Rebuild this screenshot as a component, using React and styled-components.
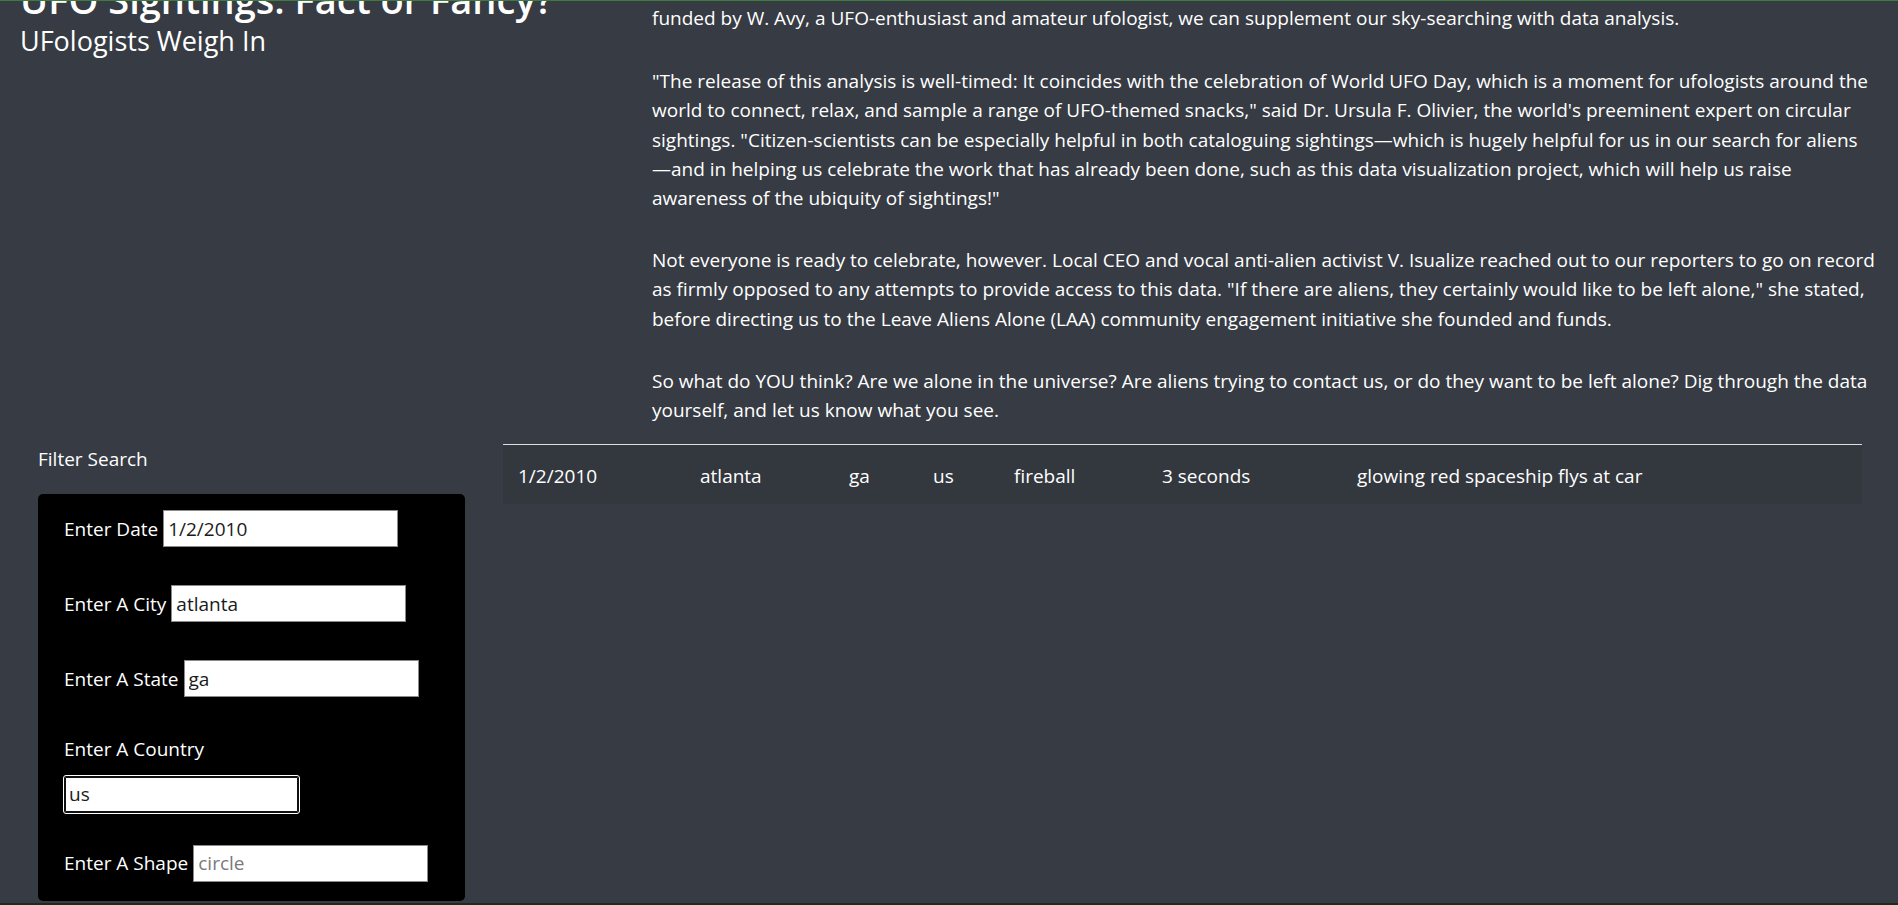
import React from 'react'
import styled, { createGlobalStyle } from 'styled-components'

const GlobalStyle = createGlobalStyle`
  html, body {
    margin: 0;
    padding: 0;
    overflow: hidden;
    background: #373b43;
  }
  body {
    font-family: "Open Sans", "Noto Sans", "Liberation Sans", sans-serif;
    color: #f8f9fa;
  }
  * { box-sizing: border-box; }
`

const WindowEdge = styled.div`
  position: fixed;
  left: 0;
  right: 0;
  ${props => (props.$bottom ? 'bottom: 0;' : 'top: 0;')}
  height: ${props => (props.$bottom ? '2px' : '1px')};
  background: ${props => (props.$bottom ? '#1d2b1b' : '#3d7c3b')};
  z-index: 10;
`

const Page = styled.div`
  width: 1898px;
  height: 905px;
  padding-top: 2px;
  display: flex;
  flex-direction: column;
`

const TopRow = styled.div`
  display: grid;
  grid-template-columns: 652px 1fr;
`

const BottomRow = styled.div`
  display: grid;
  grid-template-columns: 503px 1fr;
`

const Header = styled.header`
  padding-left: 20px;
`

const Title = styled.h1`
  margin: -25px 0 0;
  font-size: 38px;
  line-height: 44px;
  font-weight: 600;
  color: #fff;
  white-space: nowrap;
`

const Subtitle = styled.h3`
  margin: 4px 0 0;
  font-size: 27px;
  line-height: 32px;
  font-weight: 400;
  color: #fff;
`

const Article = styled.article`
  padding: 2px 10px 0 0;
`

const Paragraph = styled.p`
  margin: 0 0 ${props => props.$space || 33}px;
  font-size: 19px;
  line-height: 29.2px;
  white-space: nowrap;
  color: #fff;
`

const Sidebar = styled.aside`
  padding: 1px 0 0 38px;
`

const FilterTitle = styled.div`
  font-size: 19px;
  line-height: 28.5px;
  margin-bottom: 20.5px;
  color: #fff;
`

const FilterPanel = styled.form`
  width: 427px;
  height: 407px;
  background: #000;
  border-radius: 5px;
  padding: 16px 26px 20px;
`

const FilterList = styled.ul`
  list-style: none;
  margin: 0;
  padding: 0;
`

const FilterItem = styled.li`
  display: flex;
  flex-direction: ${props => (props.$stacked ? 'column' : 'row')};
  align-items: ${props => (props.$stacked ? 'flex-start' : 'baseline')};
  gap: ${props => (props.$stacked ? '12px' : '5px')};
  margin-bottom: ${props => props.$space}px;
`

const FilterLabel = styled.label`
  font-size: 19px;
  line-height: 28.5px;
  color: #fff;
  white-space: nowrap;
`

const FilterInput = styled.input`
  width: 235px;
  height: 37px;
  padding: 0 4px;
  font-family: inherit;
  font-size: 19px;
  color: #1b1b1b;
  background: #fff;
  border: 1px solid #8a8a8a;
  border-radius: ${props => (props.$focused ? '2px' : '0')};
  ${props => props.$focused && `
    border-color: #101010;
    box-shadow: inset 0 0 0 1px #101010;
    outline: 1px solid #ffffff;
  `}

  &::placeholder {
    color: #7a7a7a;
  }
`

const Results = styled.section`
  padding-right: 36px;
`

const ResultRow = styled.div`
  display: grid;
  grid-template-columns: 182px 149px 84px 81px 148px 195px 1fr;
  align-items: center;
  height: 60px;
  padding: 2px 0 0 15px;
  border-top: 1px solid #dedede;
  background: #33373e;
`

const Cell = styled.div`
  font-size: 19px;
  color: #fff;
  white-space: nowrap;
`

const sighting = ['1/2/2010', 'atlanta', 'ga', 'us', 'fireball', '3 seconds', 'glowing red spaceship flys at car']

const filters = [
  { id: 'datetime', label: 'Enter Date', value: '1/2/2010' },
  { id: 'city', label: 'Enter A City', value: 'atlanta' },
  { id: 'state', label: 'Enter A State', value: 'ga' },
  { id: 'country', label: 'Enter A Country', value: 'us', stacked: true, focused: true, space: 32 },
  { id: 'shape', label: 'Enter A Shape', placeholder: 'circle', space: 0 },
]

export default function App() {
  return (
    <>
      <GlobalStyle />
      <WindowEdge />
      <Page>
        <TopRow>
          <Header>
            <Title>UFO Sightings: Fact or Fancy?</Title>
            <Subtitle>UFologists Weigh In</Subtitle>
          </Header>
          <Article>
            <Paragraph $space={34}>
              funded by W. Avy, a UFO-enthusiast and amateur ufologist, we can supplement our sky-searching with data analysis.
            </Paragraph>
            <Paragraph>
              "The release of this analysis is well-timed: It coincides with the celebration of World UFO Day, which is a moment for ufologists around the<br />
              world to connect, relax, and sample a range of UFO-themed snacks," said Dr. Ursula F. Olivier, the world's preeminent expert on circular<br />
              sightings. "Citizen-scientists can be especially helpful in both cataloguing sightings—which is hugely helpful for us in our search for aliens<br />
              —and in helping us celebrate the work that has already been done, such as this data visualization project, which will help us raise<br />
              awareness of the ubiquity of sightings!"
            </Paragraph>
            <Paragraph>
              Not everyone is ready to celebrate, however. Local CEO and vocal anti-alien activist V. Isualize reached out to our reporters to go on record<br />
              as firmly opposed to any attempts to provide access to this data. "If there are aliens, they certainly would like to be left alone," she stated,<br />
              before directing us to the Leave Aliens Alone (LAA) community engagement initiative she founded and funds.
            </Paragraph>
            <Paragraph $space={19}>
              So what do YOU think? Are we alone in the universe? Are aliens trying to contact us, or do they want to be left alone? Dig through the data<br />
              yourself, and let us know what you see.
            </Paragraph>
          </Article>
        </TopRow>
        <BottomRow>
          <Sidebar>
            <FilterTitle>Filter Search</FilterTitle>
            <FilterPanel onSubmit={e => e.preventDefault()}>
              <FilterList>
                {filters.map(f => (
                  <FilterItem key={f.id} $stacked={f.stacked} $space={f.space ?? 38}>
                    <FilterLabel htmlFor={f.id}>{f.label}</FilterLabel>
                    <FilterInput
                      id={f.id}
                      type='text'
                      defaultValue={f.value}
                      placeholder={f.placeholder}
                      $focused={f.focused}
                    />
                  </FilterItem>
                ))}
              </FilterList>
            </FilterPanel>
          </Sidebar>
          <Results>
            <ResultRow>
              {sighting.map((value, i) => <Cell key={i}>{value}</Cell>)}
            </ResultRow>
          </Results>
        </BottomRow>
      </Page>
      <WindowEdge $bottom />
    </>
  )
}
